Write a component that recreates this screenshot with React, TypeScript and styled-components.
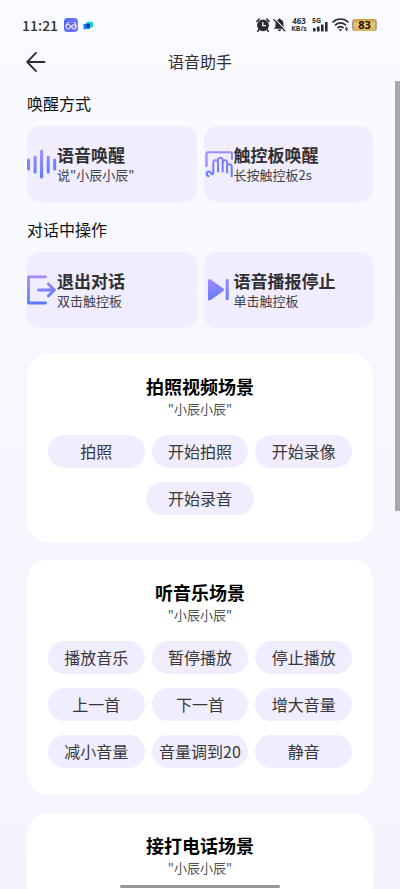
import React from "react";
import styled, { createGlobalStyle } from "styled-components";

const GlobalStyle = createGlobalStyle`
  * { box-sizing: border-box; }
  html, body { margin: 0; padding: 0; }
  body, button {
    font-family: "Noto Sans CJK SC", "Noto Sans", sans-serif;
  }
`;

const Page = styled.div`
  position: relative;
  display: flex;
  flex-direction: column;
  height: 100vh;
  overflow: hidden;
  color: #303034;
  background: linear-gradient(#fafbff, #f3f4fe);
`;

const StatusBar = styled.div`
  display: flex;
  flex: none;
  align-items: center;
  justify-content: space-between;
  height: 44px;
  padding: 6px 23px 0 22px;
`;

const StatusGroup = styled.div<{ $gap: number }>`
  display: flex;
  align-items: center;
  gap: ${(p) => p.$gap}px;
`;

const Clock = styled.span`
  margin-right: 2px;
  font-size: 14px;
  font-weight: 500;
  line-height: 20px;
`;

const Speed = styled.span`
  display: flex;
  flex-direction: column;
  align-items: center;
  width: 20px;
  font: 700 8px/8px "Noto Sans", sans-serif;
`;

const SpeedUnit = styled.span`
  font-size: 7px;
`;

const Header = styled.header`
  display: grid;
  flex: none;
  grid-template-columns: 48px 1fr 48px;
  align-items: center;
  height: 36px;
  margin-bottom: 1px;
`;

const BackButton = styled.button`
  display: flex;
  justify-content: flex-end;
  padding: 0 2px 0 0;
  border: 0;
  background: none;
  color: #2c2c30;
  cursor: pointer;
`;

const PageTitle = styled.h1`
  margin: 0;
  padding-bottom: 2px;
  font-size: 16px;
  font-weight: 400;
  line-height: 22px;
  text-align: center;
`;

const Content = styled.main`
  flex: 1;
  min-height: 0;
  overflow: hidden;
  padding: 10px 27px 0;
`;

const Section = styled.section`
  margin-bottom: 15px;
`;

const SectionLabel = styled.h2`
  margin: 0 0 11px;
  color: #111113;
  font-size: 16px;
  font-weight: 400;
  line-height: 24px;
`;

const TipGrid = styled.div`
  display: grid;
  grid-template-columns: 1fr 1fr;
  gap: 7px;
`;

const Tip = styled.div`
  display: flex;
  align-items: center;
  height: 76px;
  border-radius: 13px;
  background: #f0edfe;
`;

const TipTitle = styled.div`
  font-size: 17px;
  font-weight: 700;
  line-height: 22px;
`;

const TipText = styled.div`
  color: #404044;
  font-size: 13px;
  line-height: 18px;
`;

const SceneList = styled.div`
  display: grid;
  gap: 18px;
  margin-top: 26px;
`;

const Scene = styled.section`
  min-height: 188px;
  padding: 20px 21px 27px;
  border-radius: 21px;
  background: #fff;
  text-align: center;
`;

const SceneTitle = styled.h2`
  margin: 0;
  color: #000;
  font-size: 18px;
  font-weight: 700;
  line-height: 24px;
`;

const SceneText = styled.p`
  margin: 0;
  color: #505054;
  font-size: 13px;
  line-height: 22px;
`;

const Commands = styled.div`
  display: flex;
  flex-wrap: wrap;
  justify-content: center;
  gap: 14px 7px;
  margin-top: 15px;
`;

const Command = styled.button<{ $fit?: boolean }>`
  flex: none;
  width: ${(p) => (p.$fit ? "auto" : "calc((100% - 14px) / 3)")};
  height: 33px;
  padding: 0 ${(p) => (p.$fit ? 22 : 0)}px 2px;
  border: 0;
  border-radius: 17px;
  background: #f0edfe;
  color: #38383c;
  font-size: 16px;
  line-height: 24px;
  white-space: nowrap;
  cursor: pointer;
`;

const ScrollThumb = styled.div`
  position: absolute;
  top: 81px;
  right: 0;
  width: 5px;
  height: 430px;
  background: #a9a9ad;
`;

const HomeIndicator = styled.div`
  position: absolute;
  bottom: 1px;
  left: 30%;
  width: 40%;
  height: 3px;
  border-radius: 2px;
  background: #98989a;
`;

const Icon = styled.svg`
  display: block;
  flex: none;
`;

const GradientDefs = ({ id }: { id: string }) => (
  <defs>
    <linearGradient id={id} gradientUnits="userSpaceOnUse" x1="10" y1="0" x2="14" y2="30">
      <stop offset="0" stopColor="#ab8cfb" />
      <stop offset="1" stopColor="#5678fc" />
    </linearGradient>
  </defs>
);

const WaveIcon = () => (
  <Icon width="30" height="30" viewBox="0 0 30 30" aria-hidden="true">
    <GradientDefs id="wave" />
    <g fill="url(#wave)">
      <rect x="0" y="9.5" width="3" height="12" rx="1.5" />
      <rect x="6.6" y="6.5" width="3" height="18" rx="1.5" />
      <rect x="13.1" y="0.6" width="3" height="29" rx="1.5" />
      <rect x="19.7" y="6.5" width="3" height="18" rx="1.5" />
      <rect x="26.2" y="9.5" width="3" height="12" rx="1.5" />
    </g>
  </Icon>
);

const TouchIcon = () => (
  <Icon width="30" height="30" viewBox="0 0 30 30" aria-hidden="true">
    <GradientDefs id="touch" />
    <g fill="none" stroke="url(#touch)" strokeWidth="2" strokeLinecap="round" strokeLinejoin="round">
      <path d="M2.500 17V4.800a1.500 1.500 0 0 1 1.500-1.500h22.500a1.500 1.500 0 0 1 1.500 1.500V10" />
      <path d="M4.600 27.200C1.900 26.200 2.400 22.600 5 22.600c2.200 0 1.600 2.600 3.100 2.600 1 0 1.200-.8 1.200-1.800V13.600a2.350 2.350 0 0 1 4.700 0" />
      <path d="M14 22.500V11.200a2.350 2.350 0 0 1 4.700 0v11.300" />
      <path d="M18.700 13.500a2.200 2.200 0 0 1 4.400 0v10" />
      <path d="M23.100 17.500a2.300 2.300 0 0 1 4.600 0v9.700" />
    </g>
  </Icon>
);

const ExitIcon = () => (
  <Icon width="30" height="30" viewBox="0 0 30 30" aria-hidden="true">
    <GradientDefs id="exit" />
    <g fill="none" stroke="url(#exit)" strokeWidth="2.800" strokeLinecap="round" strokeLinejoin="round">
      <path d="M18.500 1.900H1.500V28H18.500" />
      <path d="M11.500 15h16M21.300 9l6 6-6 6" />
    </g>
  </Icon>
);

const SkipIcon = () => (
  <Icon width="30" height="30" viewBox="0 0 30 30" aria-hidden="true">
    <GradientDefs id="skip" />
    <path
      d="M5.500 5.500v18.500l13-9.200z"
      fill="url(#skip)"
      stroke="url(#skip)"
      strokeWidth="3"
      strokeLinejoin="round"
    />
    <rect x="21.700" y="4" width="3" height="21" rx="1" fill="url(#skip)" />
  </Icon>
);

const BackIcon = () => (
  <Icon width="20" height="20" viewBox="0 0 20 20" aria-hidden="true">
    <path
      d="M18.500 10H1.200M10 .9 1.200 10l8.800 9.100"
      fill="none"
      stroke="currentColor"
      strokeWidth="1.800"
      strokeLinecap="round"
      strokeLinejoin="round"
    />
  </Icon>
);

const GlassesAppIcon = () => (
  <Icon width="14" height="14" viewBox="0 0 14 14" aria-hidden="true">
    <defs>
      <linearGradient id="glasses" x1="0" y1="0" x2="1" y2="0.300">
        <stop offset="0" stopColor="#4a63ee" />
        <stop offset="1" stopColor="#7c78fb" />
      </linearGradient>
    </defs>
    <rect width="14" height="14" rx="3.500" fill="url(#glasses)" />
    <g fill="none" stroke="#fff" strokeWidth="0.900" strokeLinecap="round">
      <circle cx="4.300" cy="8.700" r="2.300" />
      <circle cx="9.900" cy="8.700" r="2.100" />
      <path d="M2 8.200c0-2.200 1.200-3.500 3-4M6.600 8.400c.4-.5.8-.5 1.200 0M12 8.200c.1-1.800-.6-3.300-2-4" />
    </g>
  </Icon>
);

const ChatAppIcon = () => (
  <Icon width="13" height="13" viewBox="0 0 13 13" aria-hidden="true">
    <rect width="13" height="13" rx="3" fill="#fff" />
    <path d="M4.500 2.800H11v5.200H9.800l-1 1H4.500z" fill="#13d5e3" />
    <path d="M1.500 4.800H8V10H3.500l-1 .5-1-.5z" fill="#167df5" />
    <path d="M4.500 4.800H8v3.700H4.500z" fill="#073c9d" />
  </Icon>
);

const AlarmIcon = () => (
  <Icon width="14" height="14" viewBox="0 0 14 14" aria-hidden="true">
    <circle cx="7" cy="7.300" r="5.900" fill="#2c2c30" />
    <path
      d="M.9 3.300 3.300 1M13.100 3.300 10.700 1M2.900 11.800l-1.200 1.400M11.100 11.800l1.200 1.400"
      stroke="#2c2c30"
      strokeWidth="1.600"
      strokeLinecap="round"
    />
    <path d="M6.800 4v3.700h3" fill="none" stroke="#fff" strokeWidth="1.300" />
  </Icon>
);

const MutedBellIcon = () => (
  <Icon width="13" height="14" viewBox="0 0 13 14" aria-hidden="true">
    <path
      d="M6.500.4c.7 0 1.100.5 1.100 1.100 1.800.5 2.900 1.900 2.900 3.900v3.100l1.700 2.200H.8l1.700-2.200V5.400c0-2 1.100-3.400 2.900-3.900 0-.6.4-1.100 1.100-1.100zM4.700 11.600h3.600c-.1 1-.8 1.700-1.800 1.700s-1.700-.7-1.800-1.700z"
      fill="#2c2c30"
    />
    <path d="M1.800.8 12.800 12.200" stroke="#fafbff" strokeWidth="1.200" />
    <path d="M.8 1.500 12 13" stroke="#2c2c30" strokeWidth="1.100" strokeLinecap="round" />
  </Icon>
);

const Signal = styled.span`
  display: flex;
  flex-direction: column;
  width: 17px;
  height: 16px;
  font: 700 7px/7px "Noto Sans", sans-serif;
`;

const SignalBars = () => (
  <Icon width="17" height="8" viewBox="0 0 17 8" overflow="visible" aria-hidden="true">
    <g fill="#2c2c30">
      <rect x="1" y="4" width="2.600" height="3.500" rx="0.600" />
      <rect x="5" y="2.500" width="2.600" height="5" rx="0.600" />
      <rect x="9" y="0.500" width="2.600" height="7" rx="0.600" />
      <rect x="13" y="-2" width="2.600" height="9.500" rx="0.600" />
    </g>
  </Icon>
);

const WifiIcon = () => (
  <Icon width="17" height="14" viewBox="0 0 17 14" aria-hidden="true">
    <g fill="none" stroke="#2c2c30" strokeWidth="1.700" strokeLinecap="round">
      <path d="M1 4c4.200-4 10.800-4 15 0M3.500 6.900c2.900-2.700 7.100-2.700 10 0M6 9.600c1.500-1.300 3.500-1.300 5 0" />
    </g>
    <path d="M6.700 11.200h3.600L8.500 13.500z" fill="#2c2c30" />
    <path d="M14.500 8.700 16.200 10.700h-3.400zM14.500 13.300 16.200 11.300h-3.400z" fill="#2c2c30" />
  </Icon>
);

const Battery = styled.span`
  width: 25px;
  height: 12px;
  border: solid #a3a3a8;
  border-width: 0 2px;
  border-radius: 3px;
  background: linear-gradient(#c99a3c, #efc76c 40%, #dcb057);
  color: #111;
  font: 700 11px/12px "Noto Sans", sans-serif;
  text-align: center;
`;

const tipGroups = [
  {
    label: "唤醒方式",
    tips: [
      { icon: <WaveIcon />, title: "语音唤醒", text: '说"小辰小辰"' },
      { icon: <TouchIcon />, title: "触控板唤醒", text: "长按触控板2s" },
    ],
  },
  {
    label: "对话中操作",
    tips: [
      { icon: <ExitIcon />, title: "退出对话", text: "双击触控板" },
      { icon: <SkipIcon />, title: "语音播报停止", text: "单击触控板" },
    ],
  },
];

const scenes = [
  { title: "拍照视频场景", commands: ["拍照", "开始拍照", "开始录像", "开始录音"] },
  {
    title: "听音乐场景",
    commands: [
      "播放音乐", "暂停播放", "停止播放",
      "上一首", "下一首", "增大音量",
      "减小音量", "音量调到20", "静音",
    ],
  },
  { title: "接打电话场景", commands: [] as string[] },
];

export default function App() {
  return (
    <>
      <GlobalStyle />
      <Page>
        <StatusBar>
          <StatusGroup $gap={4}>
            <Clock>11:21</Clock>
            <GlassesAppIcon />
            <ChatAppIcon />
          </StatusGroup>
          <StatusGroup $gap={3}>
            <AlarmIcon />
            <MutedBellIcon />
            <Speed>
              463
              <SpeedUnit>KB/s</SpeedUnit>
            </Speed>
            <Signal>
              5G
              <SignalBars />
            </Signal>
            <WifiIcon />
            <Battery>83</Battery>
          </StatusGroup>
        </StatusBar>
        <Header>
          <BackButton aria-label="返回">
            <BackIcon />
          </BackButton>
          <PageTitle>语音助手</PageTitle>
        </Header>
        <Content>
          {tipGroups.map((group) => (
            <Section key={group.label}>
              <SectionLabel>{group.label}</SectionLabel>
              <TipGrid>
                {group.tips.map((tip) => (
                  <Tip key={tip.title}>
                    {tip.icon}
                    <div>
                      <TipTitle>{tip.title}</TipTitle>
                      <TipText>{tip.text}</TipText>
                    </div>
                  </Tip>
                ))}
              </TipGrid>
            </Section>
          ))}
          <SceneList>
            {scenes.map((scene) => (
              <Scene key={scene.title}>
                <SceneTitle>{scene.title}</SceneTitle>
                <SceneText>"小辰小辰"</SceneText>
                <Commands>
                  {scene.commands.map((command, i) => (
                    <Command key={command} $fit={i === scene.commands.length - 1 && i % 3 === 0}>
                      {command}
                    </Command>
                  ))}
                </Commands>
              </Scene>
            ))}
          </SceneList>
        </Content>
        <ScrollThumb />
        <HomeIndicator />
      </Page>
    </>
  );
}
